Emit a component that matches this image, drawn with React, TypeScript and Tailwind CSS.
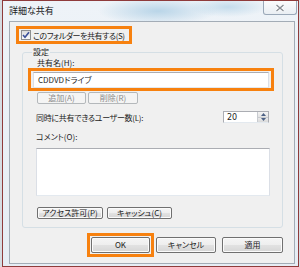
import React from "react";

const font = "font-['Meiryo_UI','Noto_Sans_CJK_JP',sans-serif] [font-feature-settings:'palt']";

function Btn({
  children,
  w,
  disabled,
}: {
  children: React.ReactNode;
  w: string;
  disabled?: boolean;
}) {
  return (
    <div
      className={
        "flex items-center justify-center rounded-[2px] border text-[8px] leading-none " +
        w +
        (disabled
          ? " border-[#b4b8bb] bg-[#f4f4f4] text-[#8a8a8a]"
          : " border-[#707070] bg-[linear-gradient(#f5f5f5_0%,#eeeeee_50%,#e2e2e2_50%,#d6d6d6_100%)] text-[#1a1a1a] shadow-[inset_0_0_0_1px_#fbfbfb]")
      }
    >
      {children}
    </div>
  );
}

export default function App() {
  return (
    <div className={"w-[300px] h-[267px] flex pl-[2px] pr-[1px] bg-[#d6dce2] " + font}>
      <div className="flex-1 flex flex-col border border-[#8f3b3b] bg-[radial-gradient(ellipse_60px_14px_at_155px_10px,#b9d5e8_0%,transparent_100%),radial-gradient(ellipse_40px_10px_at_225px_6px,#c4dcec_0%,transparent_100%),linear-gradient(#eef3f8,#e6edf4)]">
        {/* title bar */}
        <div className="h-[20px] flex items-start justify-between pl-[6px]">
          <span className="mt-[4px] text-[9px] leading-[12px] text-[#1a1a1a]">詳細な共有</span>
          <div className="w-[34px] h-[14px] mr-[1px] rounded-b-[3px] border border-t-0 border-[#9aa8b8] bg-[linear-gradient(#fbfcfd,#e9eef3)] flex items-center justify-center">
            <svg width="10" height="8" viewBox="0 0 10 8">
              <path d="M1.5 1 L8.5 7 M8.5 1 L1.5 7" stroke="#ffffff" strokeWidth="3" />
              <path d="M1.5 1 L8.5 7 M8.5 1 L1.5 7" stroke="#8a8f96" strokeWidth="1.5" />
            </svg>
          </div>
        </div>
        {/* client area */}
        <div className="flex-1 ml-[6px] mr-[3px] mb-[2px] border border-[#a3acb6] bg-[#f0f0f0] pl-[6px] pr-[11px] pt-[4px] flex flex-col text-[8px] leading-[11px] text-[#1c1c1c]">
          {/* checkbox with orange frame */}
          <div className="w-[116px] h-[18px] border-[3px] border-[#f7810f] flex items-center pl-[2px] gap-[2px] overflow-hidden">
            <div className="shrink-0 w-[10px] h-[10px] border border-[#8e8f8f] bg-[linear-gradient(#dcdcdc,#fbfbfb)] flex items-center justify-center">
              <svg width="8" height="8" viewBox="0 0 8 8">
                <path d="M1 4 L3 6.3 L7 1.2" fill="none" stroke="#3c5199" strokeWidth="1.6" />
              </svg>
            </div>
            <span className="whitespace-nowrap tracking-[-0.45px]">このフォルダーを共有する(S)</span>
          </div>
          {/* group box */}
          <div className="mt-[8px] ml-[6px] h-[176px] border border-[#d5dfe5] rounded-[3px] pl-[5px] flex flex-col">
            <div className="-mt-[7px] ml-[4px] px-[1px] bg-[#f0f0f0] w-fit">設定</div>
            <div className="ml-[9px]">共有名(H):</div>
            <div className="w-[246px] h-[23px] border-[3px] border-[#f7810f] px-[2px] flex items-center">
              <div className="flex-1 h-[16px] border border-[#abadb3] border-b-[#e3e9ef] border-x-[#dbdfe6] bg-white pl-[4px] flex items-center">
                CDDVDドライブ
              </div>
            </div>
            <div className="mt-[1px] ml-[9px] flex gap-[2px]">
              <Btn w="w-[49px] h-[12px]" disabled>
                追加(A)
              </Btn>
              <Btn w="w-[50px] h-[12px]" disabled>
                削除(R)
              </Btn>
            </div>
            <div className="mt-[7px] ml-[8px] w-[233px] h-[12px] flex items-center justify-between">
              <span className="whitespace-nowrap tracking-[-0.3px]">同時に共有できるユーザー数(L):</span>
              <div className="w-[46px] h-[12px] flex border border-[#abadb3] border-b-[#e3e9ef] bg-white">
                <div className="flex-1 pl-[3px] flex items-center font-['DejaVu_Sans',sans-serif] text-[8px]">20</div>
                <div className="w-[11px] flex flex-col border-l border-[#c8cbd0]">
                  <div className="flex-1 flex items-center justify-center bg-[linear-gradient(#f4f4f4,#e3e3e3)] border-b border-[#c8cbd0]">
                    <svg width="5" height="3" viewBox="0 0 5 3">
                      <path d="M0 3 L2.5 0 L5 3 Z" fill="#4d6185" />
                    </svg>
                  </div>
                  <div className="flex-1 flex items-center justify-center bg-[linear-gradient(#eaeaea,#dadada)]">
                    <svg width="5" height="3" viewBox="0 0 5 3">
                      <path d="M0 0 L2.5 3 L5 0 Z" fill="#4d6185" />
                    </svg>
                  </div>
                </div>
              </div>
            </div>
            <div className="mt-[8px] ml-[8px]">コメント(O):</div>
            <div className="mt-[6px] ml-[8px] w-[234px] h-[48px] border border-[#abadb3] border-b-[#e3e9ef] border-x-[#dbdfe6] bg-white" />
            <div className="mt-[11px] ml-[9px] flex gap-[4px]">
              <Btn w="w-[66px] h-[12px]">アクセス許可(P)</Btn>
              <Btn w="w-[65px] h-[12px]">キャッシュ(C)</Btn>
            </div>
          </div>
          {/* bottom buttons */}
          <div className="mt-[5px] flex items-center justify-end">
            <div className="border-[3px] border-[#f7810f] p-[1px]">
              <Btn w="w-[59px] h-[16px]">OK</Btn>
            </div>
            <div className="ml-[2px]">
              <Btn w="w-[60px] h-[16px]">キャンセル</Btn>
            </div>
            <div className="ml-[6px]">
              <Btn w="w-[61px] h-[16px]">適用</Btn>
            </div>
          </div>
        </div>
      </div>
    </div>
  );
}
